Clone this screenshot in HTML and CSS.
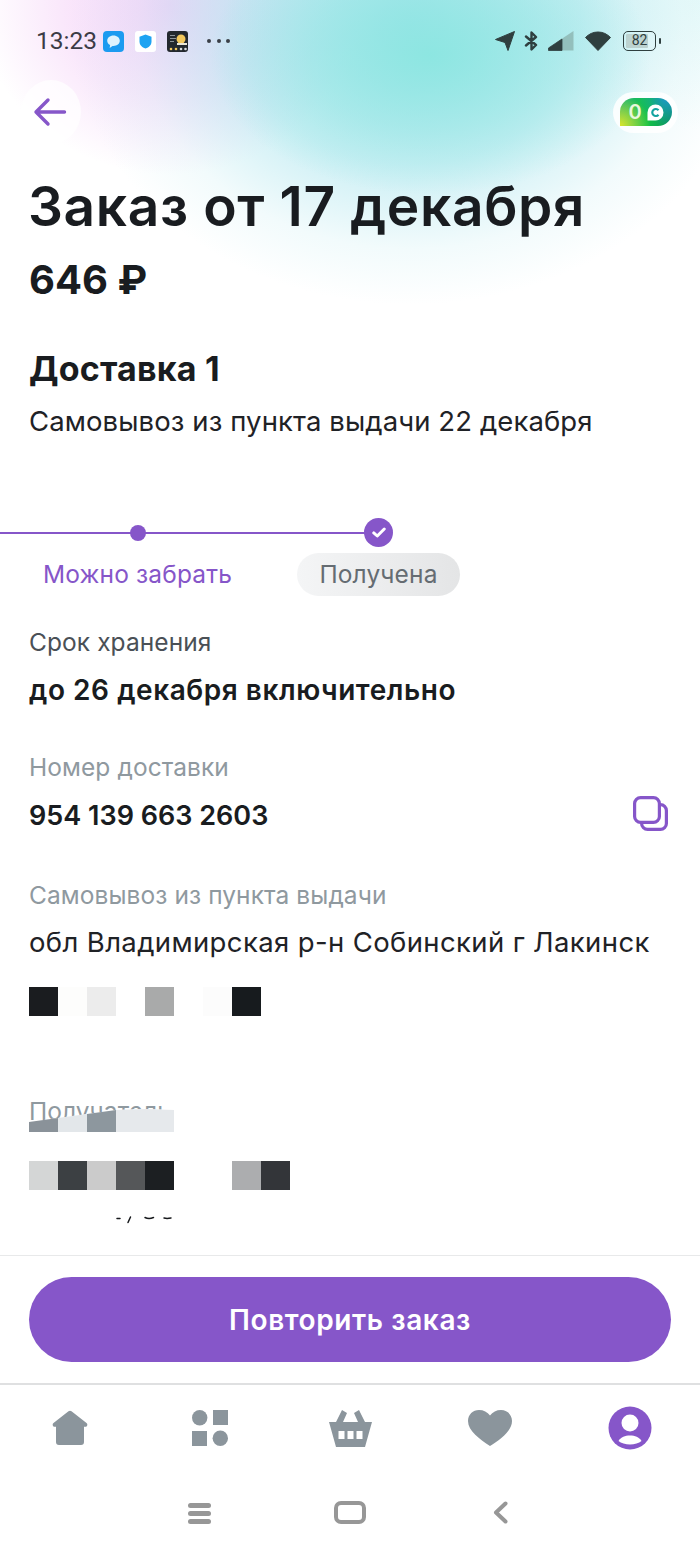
FILE: index.html
```html
<!DOCTYPE html>
<html lang="ru">
<head>
<meta charset="utf-8">
<title>Заказ от 17 декабря</title>
<link rel="stylesheet" href="styles.css">
</head>
<body>
<div class="screen">
  <div class="glow"></div>
  <header class="status">
    <div class="status-left">
      <span class="time">13:23</span>
      <svg class="app" viewBox="0 0 21 21"><rect width="21" height="21" rx="4" fill="#1c9bf0"/><path d="M10.500 4.500c3.600 0 6.300 2.300 6.300 5.200s-2.700 5.200-6.300 5.200l-1 0-2.800 2 .4-2.800c-1.800-.9-2.900-2.500-2.900-4.400 0-2.900 2.700-5.200 6.300-5.200z" fill="#dff3fd"/></svg>
      <svg class="app app-gap" viewBox="0 0 21 21"><rect width="21" height="21" rx="3" fill="#fff"/><path d="M10.500 3.500l6 2.200v4.800c0 3.500-2.400 5.800-6 7-3.600-1.200-6-3.500-6-7V5.700z" fill="#1ea3f2"/></svg>
      <svg class="app app-gap" viewBox="0 0 21 21"><rect width="21" height="21" rx="3" fill="#23282e"/><circle cx="14" cy="8" r="4.500" fill="#f2c75c"/><path d="M10 12h10v2H10z" fill="#e9e6d8"/><path d="M3 4h5v1H3zM3 7h6v1H3zM3 10h4v1H3z" fill="#8d949a"/><circle cx="4" cy="18" r="1.300" fill="#f2c75c"/><circle cx="9" cy="18" r="1.300" fill="#f2c75c"/><circle cx="14" cy="18" r="1.300" fill="#d9dcdf"/><circle cx="18.500" cy="18" r="1.300" fill="#d9dcdf"/></svg>
      <span class="dots"><i></i><i></i><i></i></span>
    </div>
    <div class="status-right">
      <svg class="si-loc" viewBox="0 0 20 20"><path d="M.5 8.500L19.500.5 13 19.500l-3-8z" fill="#2f3f3f" stroke="#2f3f3f" stroke-linejoin="round"/></svg>
      <svg class="si-bt" viewBox="0 0 15 20"><path d="M2 5.500l10 8.500-4.500 4.500V1.500L12 6 2 14.500" fill="none" stroke="#2f3f3f" stroke-width="2.400" stroke-linejoin="round" stroke-linecap="round"/></svg>
      <svg class="si-sig" viewBox="0 0 26 20"><path d="M25.500 0v19.500H9V11z" fill="#93bfbc"/><path d="M14 8v11.500H.5V17z" fill="#2f3f3f" stroke="#2f3f3f" stroke-linejoin="round" stroke-width=".8"/></svg>
      <svg class="si-wifi" viewBox="0 0 26 20"><path d="M.5 6.500C4 3 8 1 13 1s9 2 12.500 5.500L13 19.500z" fill="#2f3f3f" stroke="#2f3f3f" stroke-linejoin="round"/></svg>
      <span class="battery"><span class="batt-body"><span class="batt-fill"></span><span class="batt-num">82</span></span><span class="batt-tip"></span></span>
    </div>
  </header>

  <div class="topbar">
    <span class="back">
      <svg class="back-icon" viewBox="0 0 34 30"><path d="M31.500 15H3M15 3L3 15l12 12" fill="none" stroke="#8656c9" stroke-width="3.400" stroke-linecap="round" stroke-linejoin="round"/></svg>
    </span>
    <span class="bonus">
      <span class="bonus-pill">
        <span class="bonus-num">0</span>
        <svg class="bonus-mark" viewBox="0 0 17 17"><path d="M8.500.5a8 8 0 1 1 0 16H.5v-8a8 8 0 0 1 8-8z" fill="#fff"/><path d="M11.500 6.300a3.500 3.500 0 1 0 0 4.400" fill="none" stroke="#13a3a0" stroke-width="2.200"/></svg>
      </span>
    </span>
  </div>

  <main class="content">
    <h1 class="title">Заказ от 17 декабря</h1>
    <p class="price">646 ₽</p>
    <h2 class="delivery">Доставка 1</h2>
    <p class="body-text method">Самовывоз из пункта выдачи 22 декабря</p>

    <section class="tracker">
      <div class="track">
        <span class="track-dot-wrap"><span class="track-dot"></span></span>
        <span class="track-check">
          <svg viewBox="0 0 16 12"><path d="M2 6.500l4 3.500 8-8" fill="none" stroke="#fff" stroke-width="3.400" stroke-linecap="round" stroke-linejoin="round"/></svg>
        </span>
      </div>
      <div class="steps">
        <span class="step step-done">Можно забрать</span>
        <span class="step step-now">Получена</span>
      </div>
    </section>

    <section class="field field-storage">
      <p class="label label-dark">Срок хранения</p>
      <p class="value">до 26 декабря включительно</p>
    </section>

    <section class="field field-number">
      <p class="label">Номер доставки</p>
      <div class="value-row">
        <p class="value value-num">954 139 663 2603</p>
        <svg class="copy" viewBox="0 0 38 38"><rect x="10.600" y="10.600" width="24.800" height="24.800" rx="6" fill="#fff" stroke="#8656c9" stroke-width="3.200"/><rect x="3.600" y="3.600" width="24.800" height="24.800" rx="6" fill="#fff" stroke="#8656c9" stroke-width="3.200"/></svg>
      </div>
    </section>

    <section class="field field-pickup">
      <p class="label">Самовывоз из пункта выдачи</p>
      <p class="body-text address">обл Владимирская р-н Собинский г Лакинск</p>
      <div class="mosaic mosaic-address">
        <i class="c-1a"></i><i class="c-fd"></i><i class="c-ec"></i><i class="c-ff"></i><i class="c-a9"></i><i class="c-ff"></i><i class="c-fc"></i><i class="c-17"></i>
      </div>
    </section>

    <section class="field field-receiver">
      <p class="label">Получатель</p>
      <div class="mosaic-curve">
        <i class="c-8a"></i><i class="c-e3"></i><i class="c-8d"></i><i class="c-e6"></i><i class="c-e6"></i>
      </div>
      <div class="mosaic mosaic-name">
        <i class="c-d4"></i><i class="c-3c"></i><i class="c-cb"></i><i class="c-55"></i><i class="c-1c"></i><i class="c-ff"></i><i class="c-ff"></i><i class="c-ac"></i><i class="c-33"></i>
      </div>
      <svg class="ticks" viewBox="0 0 60 8"><path d="M1 2.500h3M12 6.500L14.500 1M29 1.500c2 1 6 1 8.500 0M48 2c2 .6 4 .6 7 0" fill="none" stroke="#16181b" stroke-width="1.500" stroke-linecap="round"/></svg>
    </section>
  </main>

  <div class="action">
    <button class="repeat" type="button">Повторить заказ</button>
  </div>

  <nav class="tabs">
    <svg class="tab-home" viewBox="0 0 36 36"><path d="M16.500 1.200a2.500 2.500 0 0 1 3 0L34.500 13c1.600 1.300.8 3.800-1.300 3.800H32V32a3 3 0 0 1-3 3H7a3 3 0 0 1-3-3V16.800H2.800C.7 16.800-.1 14.300 1.500 13z" fill="#8b959c"/></svg>
    <svg class="tab-cat" viewBox="0 0 36 36"><circle cx="7.700" cy="7.700" r="7.700" fill="#8b959c"/><rect x="21" y="0" width="15" height="15" fill="#8b959c"/><rect x="0" y="21" width="15" height="15" fill="#8b959c"/><circle cx="28.300" cy="28.300" r="7.700" fill="#8b959c"/></svg>
    <svg class="tab-cart" viewBox="0 0 43 37" fill-rule="evenodd"><path d="M7 12L13 0l5 3-4 9zM36 12L30 0l-5 3 4 9z" fill="#8b959c"/><path d="M0 12h43l-1 3.500L36 37H7L1 15.500zM9.500 21v8H15.500v-8zM18.500 21v8h6v-8zM27.500 21v8h6v-8z" fill="#8b959c"/></svg>
    <svg class="tab-heart" viewBox="0 0 44 36"><path d="M22 36C12 29.500 0 21 0 11 0 4.500 5 0 11 0c4.500 0 8.500 2 11 5.500C24.500 2 28.500 0 33 0c6 0 11 4.500 11 11 0 10-12 18.500-22 25z" fill="#8b959c"/></svg>
    <svg class="tab-user" viewBox="0 0 44 44"><circle cx="22" cy="22" r="21.500" fill="#8656c9"/><circle cx="22" cy="17" r="8.500" fill="#fff"/><path d="M10.500 35c2.500-4 6.500-5.500 11.500-5.500s9 1.500 11.500 5.500c-2.500 2.200-7 3.500-11.500 3.500S13 37.200 10.500 35z" fill="#fff"/></svg>
  </nav>

  <nav class="sysnav">
    <span class="sys-menu"><i></i><i></i><i></i></span>
    <span class="sys-home"></span>
    <svg class="sys-back" viewBox="0 0 15 23"><path d="M12.500 2.500L3 11.500l9.500 9" fill="none" stroke="#979797" stroke-width="4" stroke-linecap="round" stroke-linejoin="round"/></svg>
  </nav>
</div>
</body>
</html>
```

FILE: styles.css
```css
* { box-sizing: border-box; }
html, body { margin: 0; padding: 0; background: #fff; }
p, h1, h2 { margin: 0; font-weight: 400; }

.screen {
  position: relative;
  width: 700px;
  height: 1556px;
  overflow: hidden;
  display: flex;
  flex-direction: column;
  background: #fff;
  color: #1a1c20;
  font-family: Inter, "Noto Sans", sans-serif;
}

.glow {
  position: absolute;
  left: 0;
  top: 0;
  width: 700px;
  height: 340px;
  background:
    radial-gradient(ellipse 220px 140px at 430px 55px, rgba(137,230,224,.9) 0%, rgba(137,230,224,.45) 55%, rgba(137,230,224,0) 100%),
    radial-gradient(ellipse 340px 280px at 410px 25px, rgba(165,226,236,.95) 0%, rgba(172,229,238,.62) 50%, rgba(190,235,240,.2) 80%, rgba(190,235,240,0) 100%),
    radial-gradient(ellipse 190px 170px at 170px 5px, rgba(246,208,248,1) 0%, rgba(246,214,248,.6) 55%, rgba(246,220,248,0) 100%),
    radial-gradient(ellipse 200px 130px at 700px 0px, rgba(225,248,248,.7) 0%, rgba(225,248,248,0) 100%);
}

.status {
  position: relative;
  height: 80px;
  padding: 28px 39px 0 36px;
  display: flex;
  justify-content: space-between;
  align-items: flex-start;
}
.status-left, .status-right { display: flex; align-items: center; height: 26px; }
.time {
  font-family: Roboto, "Liberation Sans", sans-serif;
  font-size: 24.500px;
  line-height: 26px;
  color: #3b3b45;
  width: 67px;
}
.app { width: 21px; height: 21px; display: block; }
.app-gap { margin-left: 11px; }
.dots { display: flex; gap: 5.500px; margin-left: 19px; }
.dots i { width: 4px; height: 4px; border-radius: 50%; background: #3a3f47; }

.status-right svg { display: block; }
.si-loc { width: 20px; height: 20px; }
.si-bt { width: 15px; height: 20px; margin-left: 8.500px; }
.si-sig { width: 26px; height: 20px; margin-left: 9.500px; }
.si-wifi { width: 26px; height: 20px; margin-left: 11px; }
.battery { display: flex; align-items: center; margin-left: 12px; }
.batt-body {
  position: relative;
  width: 33px;
  height: 20px;
  border: 1.500px solid #2f3f3f;
  border-radius: 5px;
  padding: 2px;
}
.batt-fill { display: block; width: 82%; height: 100%; background: #bcd2d0; border-radius: 1px; }
.batt-num {
  position: absolute;
  inset: 0;
  text-align: center;
  font-family: Roboto, sans-serif;
  font-size: 14px;
  line-height: 17px;
  color: #2f3f3f;
}
.batt-tip { width: 2.500px; height: 6px; margin-left: 2.500px; background: #2f3f3f; border-radius: 1px; }

.topbar {
  position: relative;
  height: 64px;
  padding: 0 22px 0 21px;
  display: flex;
  justify-content: space-between;
  align-items: center;
}
.back {
  width: 60px;
  height: 64px;
  border-radius: 50%;
  background: rgba(255,255,255,.7);
  display: flex;
  align-items: center;
  justify-content: center;
}
.back-icon { width: 34px; height: 30px; display: block; margin-left: -3px; }
.bonus {
  width: 65px;
  height: 41px;
  border-radius: 21px;
  background: rgba(255,255,255,.85);
  display: flex;
  align-items: center;
  justify-content: center;
}
.bonus-pill {
  width: 52px;
  height: 28px;
  border-radius: 14px 14px 14px 0;
  background:
    radial-gradient(circle at 0 100%, #dbe62a 0%, rgba(219,230,42,0) 52%),
    radial-gradient(circle at 90% 0, #1a98c8 0%, rgba(26,152,200,0) 50%),
    linear-gradient(100deg, #22b47a 0%, #12c246 55%, #0c8f66 100%);
  display: flex;
  align-items: center;
  gap: 5px;
  padding-left: 9px;
}
.bonus-num { font-size: 20px; line-height: 28px; font-weight: 600; color: #e9f8dc; }
.bonus-mark { width: 17px; height: 17px; display: block; }

.content {
  position: relative;
  flex: 1;
  min-height: 0;
  padding: 30px 29px 0;
  overflow: hidden;
}
.title { font-size: 55px; line-height: 64px; font-weight: 600; letter-spacing: .62px; margin-left: -1px; color: #191c20; }
.price { font-size: 40px; line-height: 56px; font-weight: 700; margin-top: 14px; color: #191c20; }
.delivery { font-size: 34px; line-height: 44px; font-weight: 700; letter-spacing: .2px; margin-top: 39px; color: #191c20; }
.body-text { font-size: 27.500px; line-height: 40px; color: #1f2226; }
.method { margin-top: 10px; letter-spacing: .1px; }

.tracker { margin: 0 -29px; padding-top: 91px; }
.track {
  position: relative;
  height: 2px;
  width: 378px;
  background: #8656c9;
}
.track-dot-wrap { position: absolute; left: 130px; top: -7px; }
.track-dot { display: block; width: 16px; height: 16px; border-radius: 50%; background: #8656c9; }
.track-check {
  position: absolute;
  left: 364px;
  top: -14px;
  width: 29px;
  height: 29px;
  border-radius: 50%;
  background: #8656c9;
  display: flex;
  align-items: center;
  justify-content: center;
}
.track-check svg { width: 14px; height: 11px; display: block; }
.steps { display: flex; align-items: center; margin-top: 19px; padding-left: 43px; }
.step { font-size: 24.500px; line-height: 43px; letter-spacing: .15px; }
.step-done { color: #8656c9; width: 254px; }
.step-now {
  color: #656c72;
  width: 163px;
  text-align: center;
  border-radius: 22px;
  background: linear-gradient(90deg, #f4f5f6, #e4e5e6);
}

.label { font-size: 24.500px; line-height: 34px; letter-spacing: .08px; color: #8f999f; }
.label-dark { color: #4a5056; }
.value { font-size: 28px; line-height: 40px; font-weight: 600; letter-spacing: .55px; color: #191c20; }
.value-num { font-size: 27px; letter-spacing: 0; }
.field-storage { margin-top: 29px; }
.field-storage .value { margin-top: 11px; }
.field-number { margin-top: 40px; }
.value-row { display: flex; justify-content: space-between; align-items: flex-start; margin-top: 12px; }
.copy { width: 38px; height: 38px; display: block; margin: -2px 2px 0 0; }
.field-pickup { margin-top: 42px; }
.address { margin-top: 10px; letter-spacing: .37px; }
.mosaic { display: flex; height: 29px; }
.mosaic i, .mosaic-curve i { display: block; width: 29px; flex: none; }
.mosaic-address { margin-top: 25px; }
.field-receiver { position: relative; margin-top: 78px; height: 144px; }
.mosaic-curve {
  position: absolute;
  left: 0;
  top: 15px;
  height: 23px;
  display: flex;
  background: #fff;
  clip-path: polygon(0 13px, 29px 9px, 58px 5px, 87px 1px, 116px 0, 145px 1px, 145px 23px, 0 23px);
}
.mosaic-name { margin-top: 33px; }
.ticks { position: absolute; left: 87px; top: 122px; width: 60px; height: 8px; display: block; }

.c-1a { background: #1a1c1f; } .c-fd { background: #fdfdfc; } .c-ec { background: #ececec; }
.c-ff { background: #fff; } .c-a9 { background: #a9aaaa; } .c-fc { background: #fcfcfc; }
.c-17 { background: #171b1e; } .c-8a { background: #8a9299; } .c-e3 { background: #e3e7ea; }
.c-8d { background: #8d979e; } .c-e6 { background: #e6e9ec; } .c-d4 { background: #d4d6d6; }
.c-3c { background: #3c4043; } .c-cb { background: #cbcbcb; } .c-55 { background: #555759; }
.c-1c { background: #1c1f22; } .c-ac { background: #acadaf; } .c-33 { background: #333539; }

.action {
  height: 130px;
  flex: none;
  padding: 21px 29px 0;
  border-top: 1px solid #e8e9ea;
  border-bottom: 2px solid #dfe0e1;
}
.repeat {
  display: block;
  width: 100%;
  height: 85px;
  border: 0;
  border-radius: 43px;
  background: #8656c9;
  color: #fff;
  font-family: inherit;
  font-size: 28px;
  font-weight: 600;
  letter-spacing: .6px;
}

.tabs {
  flex: none;
  height: 85px;
  display: grid;
  grid-template-columns: repeat(5, 140px);
  justify-items: center;
  align-items: center;
}
.tabs svg { display: block; }
.tab-home { width: 36px; height: 36px; }
.tab-cat { width: 36px; height: 36px; }
.tab-cart { width: 43px; height: 37px; margin: 2px 0 0 1px; }
.tab-heart { width: 44px; height: 36px; }
.tab-user { width: 44px; height: 44px; }

.sysnav {
  flex: none;
  height: 86px;
  padding: 31px 124px 0;
  display: grid;
  grid-template-columns: repeat(3, 151px);
  justify-items: center;
  align-items: start;
}
.sys-menu { display: flex; flex-direction: column; gap: 3.500px; width: 23px; margin-top: 2px; }
.sys-menu i { display: block; height: 4.500px; border-radius: 3px; background: #979797; }
.sys-home { width: 32px; height: 23px; border: 4px solid #979797; border-radius: 7px; margin-left: -1px; }
.sys-back { width: 15px; height: 23px; display: block; margin-left: -2px; }
```
